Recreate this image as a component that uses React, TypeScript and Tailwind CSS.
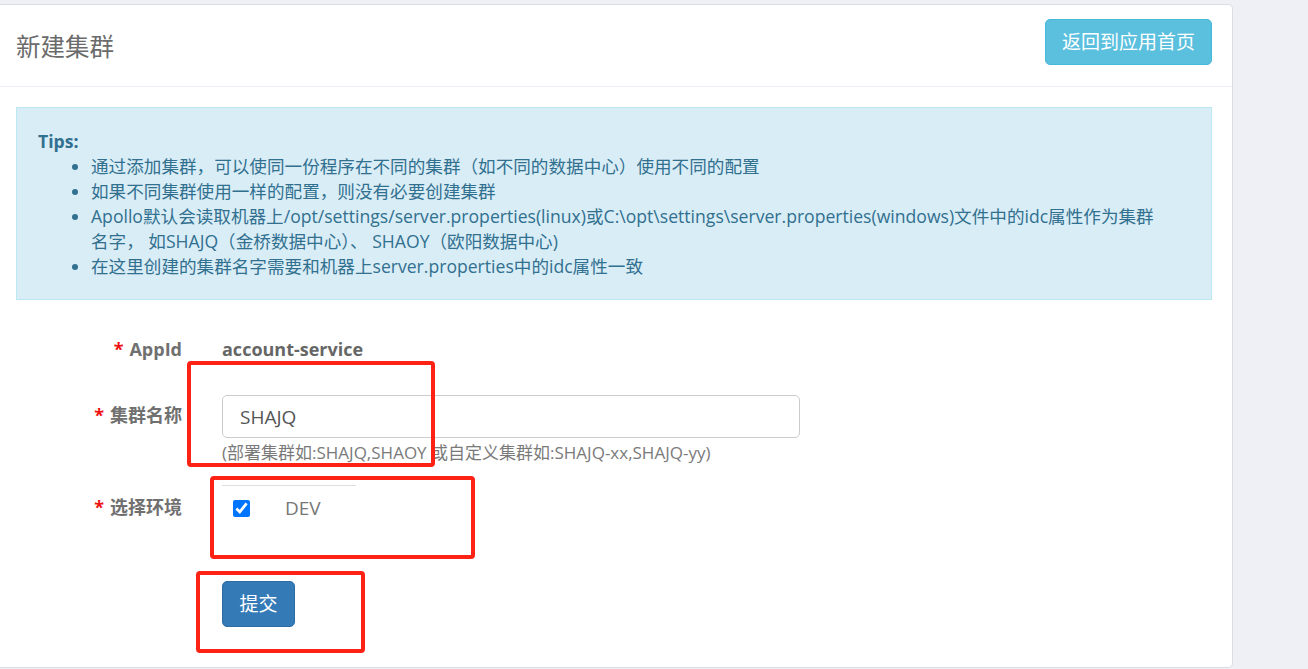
import React from "react";

const font = { fontFamily: '"Open Sans", "Noto Sans CJK SC", sans-serif' };

const tips = [
  "通过添加集群，可以使同一份程序在不同的集群（如不同的数据中心）使用不同的配置",
  "如果不同集群使用一样的配置，则没有必要创建集群",
];

function Label({ text, className = "" }: { text: string; className?: string }) {
  return (
    <div className={`text-right text-[18px] leading-[25px] font-bold text-[#707070] ${className}`}>
      <span className="text-[#e11] mr-[6px]">*</span>
      {text}
    </div>
  );
}

export default function App() {
  return (
    <div className="min-h-screen bg-[#eef0f6] pt-[4px] overflow-hidden" style={font}>
      <div className="relative w-[1233px] h-[664px] bg-white border-t border-r border-b border-[#dcdde2] rounded-tr-[5px] rounded-br-[5px]">
        {/* Header */}
        <div className="h-[82px] flex justify-between border-b border-[#eceef4] pl-[16px] pr-[20px]">
          <h1 className="mt-[25px] text-[24.5px] leading-[33px] text-[#6b6b6b] font-normal">新建集群</h1>
          <button className="mt-[14px] h-[46px] px-[16px] bg-[#5bc0de] border border-[#46b8da] rounded-[5px] text-white text-[19px]">
            返回到应用首页
          </button>
        </div>

        {/* Body */}
        <div className="px-[16px] pt-[20px]">
          <div className="w-[1196px] h-[193px] bg-[#d9edf7] border border-[#bce8f1] text-[#31708f] pt-[21px] pl-[21px] pr-[21px] text-[17.6px] leading-[25px]">
            <div className="font-bold">Tips:</div>
            <ul className="list-disc pl-[53px]">
              {tips.map((t) => (
                <li key={t}>{t}</li>
              ))}
              <li>
                Apollo默认会读取机器上/opt/settings/server.properties(linux)或C:\opt\settings\server.properties(windows)文件中的idc属性作为集群
                <br />
                名字， 如SHAJQ（金桥数据中心）、 SHAOY（欧阳数据中心)
              </li>
              <li>在这里创建的集群名字需要和机器上server.properties中的idc属性一致</li>
            </ul>
          </div>

          <div className="grid grid-cols-[166px_1fr] gap-x-[40px] mt-[37px]">
            <Label text="AppId" />
            <div className="text-[18px] leading-[25px] font-bold text-[#666]">account-service</div>

            <Label text="集群名称" className="mt-[41px]" />
            <div className="mt-[33px]">
              <input
                defaultValue="SHAJQ"
                className="w-[578px] h-[43px] border border-[#ccc] rounded-[5px] px-[17px] text-[19px] text-[#555] outline-none"
                style={font}
              />
              <div className="mt-[2px] text-[17px] leading-[25px] text-[#7a7a7a]">
                (部署集群如:SHAJQ,SHAOY 或自定义集群如:SHAJQ-xx,SHAJQ-yy)
              </div>
            </div>

            <Label text="选择环境" className="mt-[30px]" />
            <div className="mt-[20px]">
              <div className="w-[134px] border-t border-[#ddd]" />
              <div className="flex items-center h-[25px] mt-[10px] pl-[11px]">
                <input type="checkbox" defaultChecked className="w-[17px] h-[17px] accent-[#0075ff]" />
                <span className="ml-[35px] text-[19px] text-[#777]">DEV</span>
              </div>
            </div>

            <div />
            <div className="mt-[60px]">
              <button className="w-[73px] h-[46px] bg-[#337ab7] border border-[#2e6da4] rounded-[5px] text-white text-[19px]">
                提交
              </button>
            </div>
          </div>
        </div>

        {/* annotations */}
        <div className="absolute left-[187px] top-[356px] w-[248px] h-[106px] border-[4px] border-[#fe2215] rounded-[4px]" />
        <div className="absolute left-[210px] top-[471px] w-[265px] h-[83px] border-[4px] border-[#fe2215] rounded-[4px]" />
        <div className="absolute left-[196px] top-[566px] w-[169px] h-[82px] border-[4px] border-[#fe2215] rounded-[4px]" />
      </div>
    </div>
  );
}
